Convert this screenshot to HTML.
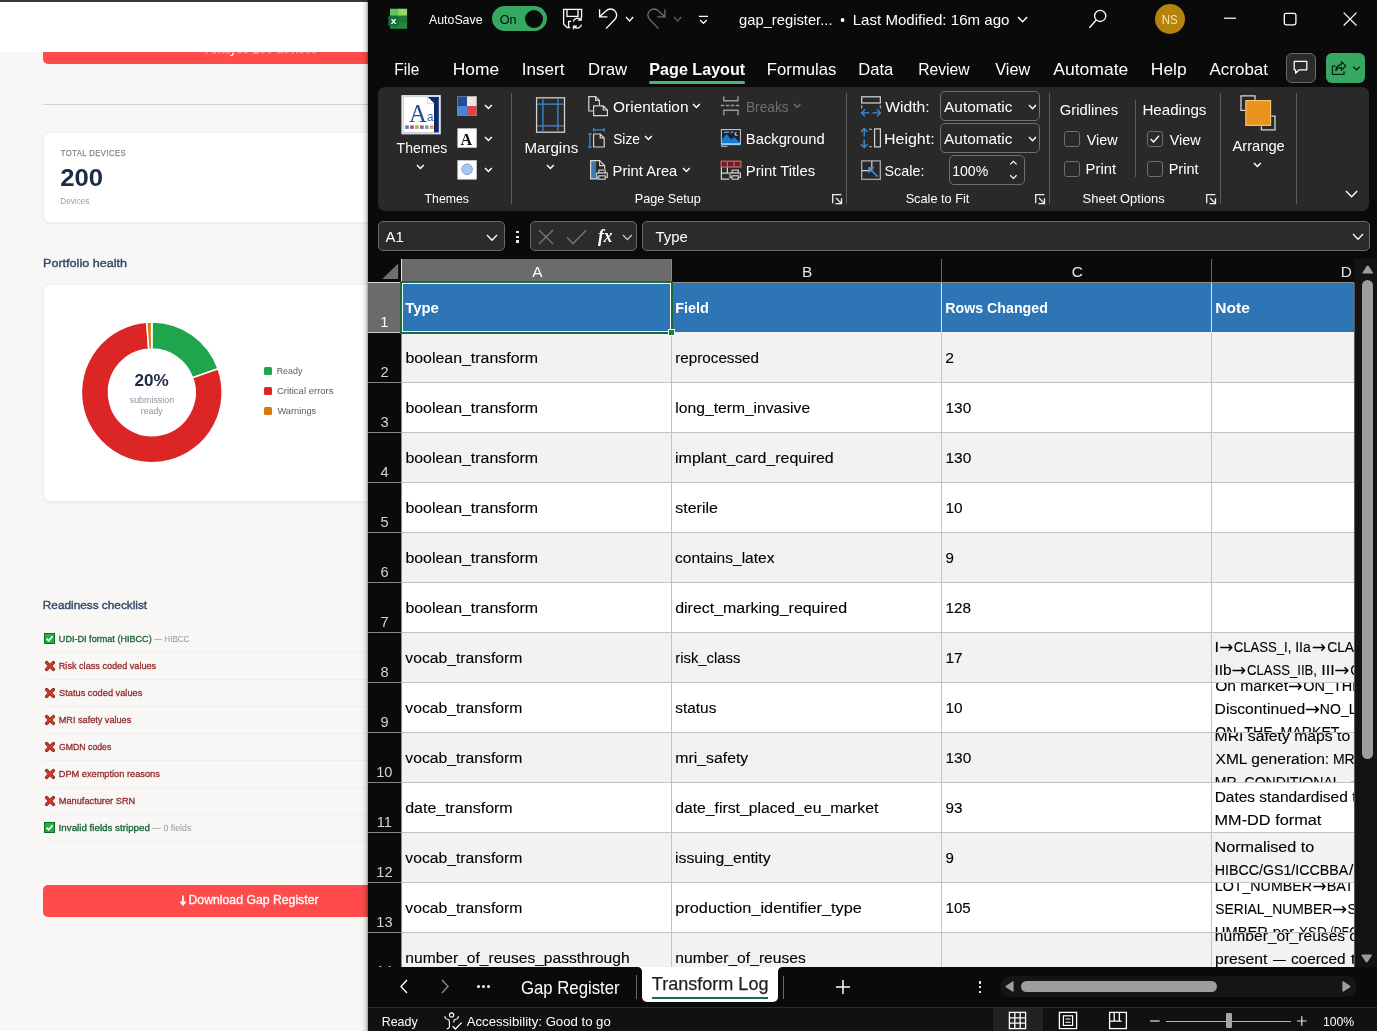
<!DOCTYPE html>
<html lang="en"><head><meta charset="utf-8"><title>Gap Register</title>
<style>
html,body{margin:0;padding:0}
body{width:1377px;height:1031px;overflow:hidden;position:relative;background:#f8f7f5;font-family:"Liberation Sans",sans-serif}
div,span.t,svg{position:absolute;box-sizing:border-box}
span.t{white-space:pre;line-height:0;transform-origin:0 50%;display:block}
svg{overflow:visible}
.clip{overflow:hidden}
#app{left:0;top:0;width:1377px;height:1031px;overflow:hidden;background:#f8f7f5;will-change:transform}
</style></head><body>
<div id="app">
<!-- ===== browser page (left) ===== -->
<div style="left:0px;top:2px;width:368px;height:50px;background:#ffffff;"></div>
<div style="left:0px;top:0px;width:368px;height:2px;background:#37383b;"></div>
<div style="left:43px;top:40px;width:420px;height:24px;background:#ff4b4b;border-radius:5px;"></div>
<span class="t" style="left:206px;top:49px;font-size:12.3px;color:#ffffff;-webkit-text-stroke:0.3px #ffffff;transform:scaleX(0.9876);">Analyse 200 devices</span>
<div style="left:43px;top:52px;width:325px;height:1px;background:rgba(255,75,75,.62);"></div>
<div style="left:0px;top:2px;width:368px;height:50px;background:#ffffff;"></div>
<div style="left:0px;top:0px;width:368px;height:2px;background:#37383b;"></div>
<div style="left:43px;top:104px;width:330px;height:1px;background:#d3d3d3;"></div>
<div style="left:43px;top:132px;width:420px;height:90.5px;background:#ffffff;border:1px solid #ededed;border-radius:7px;box-shadow:0 1px 3px rgba(0,0,0,.05);"></div>
<span class="t" style="left:60px;top:153px;font-size:8.3px;color:#85878b;-webkit-text-stroke:0.25px #85878b;letter-spacing:0.5px;transform:translateX(0.85px) scaleX(0.9200);">TOTAL DEVICES</span>
<span class="t" style="left:60px;top:178px;font-size:24.5px;color:#1b2a47;font-weight:700;transform:translateX(0.17px) scaleX(1.0476);">200</span>
<span class="t" style="left:60px;top:201px;font-size:8.4px;color:#9b9ea3;transform:translateX(0.34px) scaleX(0.9752);">Devices</span>
<span class="t" style="left:42px;top:263px;font-size:11.8px;color:#33496c;-webkit-text-stroke:0.4px #33496c;transform:translateX(0.99px) scaleX(1.0685);">Portfolio health</span>
<div style="left:43px;top:283.5px;width:420px;height:218px;background:#ffffff;border:1px solid #ededed;border-radius:7px;box-shadow:0 1px 3px rgba(0,0,0,.05);"></div>
<svg style="left:0;top:0" width="368" height="1031" viewBox="0 0 368 1031"><path d="M152.05 322.00A70.4 70.4 0 0 1 218.08 368.67L192.57 377.80A43.3 43.3 0 0 0 151.95 349.10Z" fill="#1fa64c" stroke="#fff" stroke-width="1.5"/><path d="M218.08 368.67A70.4 70.4 0 1 1 146.77 322.18L148.70 349.21A43.3 43.3 0 1 0 192.57 377.80Z" fill="#dc2626" stroke="#fff" stroke-width="1.5"/><path d="M146.77 322.18A70.4 70.4 0 0 1 151.55 322.00L151.65 349.10A43.3 43.3 0 0 0 148.70 349.21Z" fill="#d97a10" stroke="#fff" stroke-width="1.5"/></svg>
<span class="t" style="left:134px;top:381px;font-size:17px;color:#1b2a47;font-weight:700;transform:translateX(0.54px) scaleX(1.0071);">20%</span>
<span class="t" style="left:129px;top:400px;font-size:8.5px;color:#8f949c;transform:translateX(0.76px) scaleX(1.0423);">submission</span>
<span class="t" style="left:140px;top:411px;font-size:8.5px;color:#8f949c;transform:translateX(0.83px) scaleX(1.0232);">ready</span>
<div style="left:264px;top:366.7px;width:8px;height:8px;background:#1fa64c;border-radius:1.5px;"></div>
<span class="t" style="left:276px;top:371px;font-size:9.2px;color:#565d69;transform:translateX(0.69px) scaleX(0.9670);">Ready</span>
<div style="left:264px;top:386.9px;width:8px;height:8px;background:#dc2626;border-radius:1.5px;"></div>
<span class="t" style="left:276px;top:391px;font-size:9.2px;color:#565d69;transform:translateX(0.92px) scaleX(1.0369);">Critical errors</span>
<div style="left:264px;top:407.1px;width:8px;height:8px;background:#d97a10;border-radius:1.5px;"></div>
<span class="t" style="left:277px;top:411px;font-size:9.2px;color:#565d69;transform:translateX(0.38px) scaleX(1.0110);">Warnings</span>
<span class="t" style="left:42px;top:605px;font-size:11.8px;color:#33496c;-webkit-text-stroke:0.4px #33496c;transform:translateX(0.85px);">Readiness checklist</span>
<div style="left:43px;top:652px;width:330px;height:1px;background:#efeeec;"></div>
<svg style="left:44px;top:633px;" width="11" height="11" viewBox="0 0 11 11"><rect x="0.5" y="0.5" width="10" height="10" fill="#1fb141" stroke="#0f6b22"/><path d="M2.6 5.6L4.7 7.8L8.6 3.2" fill="none" stroke="#fff" stroke-width="1.6"/></svg>
<span class="t" style="left:58px;top:639px;font-size:9.4px;color:#1a6337;-webkit-text-stroke:0.3px #1a6337;transform:translateX(0.82px) scaleX(0.9692);">UDI-DI format (HIBCC)</span>
<span class="t" style="left:154px;top:639px;font-size:9.2px;color:#94979c;transform:scaleX(0.8791);">— HIBCC</span>
<div style="left:43px;top:679px;width:330px;height:1px;background:#efeeec;"></div>
<svg style="left:44.5px;top:660.8px;" width="10" height="10" viewBox="0 0 10 10"><path d="M1.6 1.6L8.4 8.4M8.4 1.6L1.6 8.4" fill="none" stroke="#7a1d12" stroke-width="3.4" stroke-linecap="round"/><path d="M1.7 1.7L8.3 8.3M8.3 1.7L1.7 8.3" fill="none" stroke="#cf3a27" stroke-width="2.2" stroke-linecap="round"/></svg>
<span class="t" style="left:58px;top:666px;font-size:9.4px;color:#922c2c;-webkit-text-stroke:0.3px #922c2c;transform:translateX(0.77px) scaleX(0.9734);">Risk class coded values</span>
<div style="left:43px;top:706px;width:330px;height:1px;background:#efeeec;"></div>
<svg style="left:44.5px;top:687.8px;" width="10" height="10" viewBox="0 0 10 10"><path d="M1.6 1.6L8.4 8.4M8.4 1.6L1.6 8.4" fill="none" stroke="#7a1d12" stroke-width="3.4" stroke-linecap="round"/><path d="M1.7 1.7L8.3 8.3M8.3 1.7L1.7 8.3" fill="none" stroke="#cf3a27" stroke-width="2.2" stroke-linecap="round"/></svg>
<span class="t" style="left:59px;top:693px;font-size:9.4px;color:#922c2c;-webkit-text-stroke:0.3px #922c2c;transform:translateX(0.08px) scaleX(0.9858);">Status coded values</span>
<div style="left:43px;top:733px;width:330px;height:1px;background:#efeeec;"></div>
<svg style="left:44.5px;top:714.8px;" width="10" height="10" viewBox="0 0 10 10"><path d="M1.6 1.6L8.4 8.4M8.4 1.6L1.6 8.4" fill="none" stroke="#7a1d12" stroke-width="3.4" stroke-linecap="round"/><path d="M1.7 1.7L8.3 8.3M8.3 1.7L1.7 8.3" fill="none" stroke="#cf3a27" stroke-width="2.2" stroke-linecap="round"/></svg>
<span class="t" style="left:58px;top:720px;font-size:9.4px;color:#922c2c;-webkit-text-stroke:0.3px #922c2c;transform:translateX(0.77px) scaleX(0.9725);">MRI safety values</span>
<div style="left:43px;top:760px;width:330px;height:1px;background:#efeeec;"></div>
<svg style="left:44.5px;top:741.8px;" width="10" height="10" viewBox="0 0 10 10"><path d="M1.6 1.6L8.4 8.4M8.4 1.6L1.6 8.4" fill="none" stroke="#7a1d12" stroke-width="3.4" stroke-linecap="round"/><path d="M1.7 1.7L8.3 8.3M8.3 1.7L1.7 8.3" fill="none" stroke="#cf3a27" stroke-width="2.2" stroke-linecap="round"/></svg>
<span class="t" style="left:59px;top:747px;font-size:9.4px;color:#922c2c;-webkit-text-stroke:0.3px #922c2c;transform:translateX(0.06px) scaleX(0.9276);">GMDN codes</span>
<div style="left:43px;top:787px;width:330px;height:1px;background:#efeeec;"></div>
<svg style="left:44.5px;top:768.8px;" width="10" height="10" viewBox="0 0 10 10"><path d="M1.6 1.6L8.4 8.4M8.4 1.6L1.6 8.4" fill="none" stroke="#7a1d12" stroke-width="3.4" stroke-linecap="round"/><path d="M1.7 1.7L8.3 8.3M8.3 1.7L1.7 8.3" fill="none" stroke="#cf3a27" stroke-width="2.2" stroke-linecap="round"/></svg>
<span class="t" style="left:58px;top:774px;font-size:9.4px;color:#922c2c;-webkit-text-stroke:0.3px #922c2c;transform:translateX(0.76px) scaleX(0.9838);">DPM exemption reasons</span>
<div style="left:43px;top:814px;width:330px;height:1px;background:#efeeec;"></div>
<svg style="left:44.5px;top:795.8px;" width="10" height="10" viewBox="0 0 10 10"><path d="M1.6 1.6L8.4 8.4M8.4 1.6L1.6 8.4" fill="none" stroke="#7a1d12" stroke-width="3.4" stroke-linecap="round"/><path d="M1.7 1.7L8.3 8.3M8.3 1.7L1.7 8.3" fill="none" stroke="#cf3a27" stroke-width="2.2" stroke-linecap="round"/></svg>
<span class="t" style="left:58px;top:801px;font-size:9.4px;color:#922c2c;-webkit-text-stroke:0.3px #922c2c;transform:translateX(0.76px) scaleX(0.9849);">Manufacturer SRN</span>
<div style="left:43px;top:841px;width:330px;height:1px;background:#efeeec;"></div>
<svg style="left:44px;top:822px;" width="11" height="11" viewBox="0 0 11 11"><rect x="0.5" y="0.5" width="10" height="10" fill="#1fb141" stroke="#0f6b22"/><path d="M2.6 5.6L4.7 7.8L8.6 3.2" fill="none" stroke="#fff" stroke-width="1.6"/></svg>
<span class="t" style="left:58px;top:828px;font-size:9.4px;color:#1a6337;-webkit-text-stroke:0.3px #1a6337;transform:translateX(0.62px) scaleX(1.0424);">Invalid fields stripped</span>
<span class="t" style="left:152px;top:828px;font-size:9.2px;color:#94979c;transform:translateX(0.30px) scaleX(0.9558);">— 0 fields</span>
<div style="left:43px;top:884.5px;width:412px;height:32px;background:#ff4b4b;border-radius:5px;"></div>
<svg style="left:180.3px;top:895.3px;" width="6" height="10.5" viewBox="0 0 6 10.5"><path d="M3 0.4V9.6M0.5 6.6L3 9.8L5.5 6.6" fill="none" stroke="#fff" stroke-width="1.7"/></svg>
<span class="t" style="left:188px;top:900px;font-size:12.3px;color:#ffffff;-webkit-text-stroke:0.3px #ffffff;transform:translateX(0.52px) scaleX(0.9959);">Download Gap Register</span>
<!-- ===== Excel window (right) ===== -->
<div style="left:360px;top:0px;width:8px;height:1031px;background:linear-gradient(90deg,rgba(0,0,0,0),rgba(0,0,0,.03) 40%,rgba(0,0,0,.16) 80%,rgba(0,0,0,.38));"></div>
<div style="left:368px;top:0px;width:1009px;height:1031px;background:#0a0a0a;"></div>
<svg style="left:386px;top:7px" width="23" height="24" viewBox="386 7 23 24"><g><rect x="390" y="8.7" width="9" height="7.4" fill="#5ec25d"/><rect x="398.5" y="8.7" width="8.6" height="7.4" fill="#93dc63"/><path d="M392.4 8.7H404.6Q407.1 8.7 407.1 11.2V26.3Q407.1 28.8 404.6 28.8H392.4Q390 28.8 390 26.3V11.2Q390 8.7 392.4 8.7Z" fill="none"/><rect x="390" y="15.7" width="17.1" height="13.1" fill="#21883c"/><rect x="398.5" y="15.7" width="8.6" height="6.6" fill="#1d7a36"/><rect x="388.3" y="15.7" width="10.4" height="10.5" fill="#176e38" rx="1.6"/></g></svg>
<span class="t" style="left:390px;top:21px;font-size:9.6px;color:#fff;font-weight:700;transform:translateX(0.85px) scaleX(1.0703);">x</span>
<span class="t" style="left:429px;top:20px;font-size:13.2px;color:#fff;transform:scaleX(0.9354);">AutoSave</span>
<div style="left:492px;top:6px;width:55px;height:25px;background:#37a862;border-radius:12.5px;"></div>
<span class="t" style="left:499px;top:20px;font-size:13.2px;color:#0a0a0a;transform:translateX(0.73px) scaleX(0.9586);">On</span>
<div style="left:525px;top:10px;width:18px;height:18px;background:#0a0a0a;border-radius:50%;"></div>
<svg style="left:562px;top:8px" width="22" height="23" viewBox="562 8 22 23"><path d="M570.2 27.6H567.2L563.6 24V9.4H581.6V17.4 M567 9.4V16.4H578V9.4 M568.6 27.4V21.4H571" fill="none" stroke="#ffffff" stroke-width="1.3" /><path d="M573.3 21.6A4.3 4.3 0 0 1 580.6 19.6 M581.2 16.8V20.2H577.8 M581.5 24.6A4.3 4.3 0 0 1 574.2 26.8 M573.5 29.4V26H576.9" fill="none" stroke="#ffffff" stroke-width="1.25" /></svg>
<svg style="left:597px;top:7px" width="22" height="24" viewBox="597 7 22 24"><path d="M599.6 9.3V16.9H607.4M599.9 16.6L606.2 10.8A6.1 6.1 0 0 1 614.8 19.5L606 28.6" fill="none" stroke="#ffffff" stroke-width="1.35" /></svg>
<svg style="left:624.8px;top:15.684px" width="9.2" height="6.032" viewBox="624.8 15.684 9.2 6.032"><path d="M625.8 16.684L629.4 20.716L633 16.684" fill="none" stroke="#ffffff" stroke-width="1.3" /></svg>
<svg style="left:645px;top:7px" width="22" height="24" viewBox="645 7 22 24"><path d="M664.9 9.3V16.9H657.1M664.6 16.6L658.3 10.8A6.1 6.1 0 0 0 649.7 19.5L658.5 28.6" fill="none" stroke="#6c6c6c" stroke-width="1.35" /></svg>
<svg style="left:672.8px;top:15.684px" width="9.2" height="6.032" viewBox="672.8 15.684 9.2 6.032"><path d="M673.8 16.684L677.4 20.716L681 16.684" fill="none" stroke="#5c5c5c" stroke-width="1.3" /></svg>
<svg style="left:697px;top:14px" width="13" height="12" viewBox="697 14 13 12"><path d="M698.9 16.3H708M700.1 20L703.45 23.3L706.8 20" fill="none" stroke="#ffffff" stroke-width="1.25" /></svg>
<span class="t" style="left:739px;top:20px;font-size:14.6px;color:#fff;transform:scaleX(1.0107);">gap_register...</span>
<span class="t" style="left:840px;top:20px;font-size:14.6px;color:#fff;transform:translateX(0.31px) scaleX(0.8966);">•</span>
<span class="t" style="left:852px;top:20px;font-size:14.6px;color:#fff;transform:translateX(0.69px) scaleX(1.0332);">Last Modified: 16m ago</span>
<svg style="left:1017.2px;top:15.808px" width="11.2" height="6.784" viewBox="-5.6 -3.392 11.2 6.784"><path d="M-4.6 -2.392L0 2.392L4.6 -2.392" fill="none" stroke="#fff" stroke-width="1.45"/></svg>
<svg style="left:1087px;top:8px" width="22" height="22" viewBox="1087 8 22 22"><circle cx="1100.2" cy="15.9" r="5.6" fill="none" stroke="#fff" stroke-width="1.3"/><path d="M1096.3 20L1089.4 27.8" fill="none" stroke="#ffffff" stroke-width="1.3" /></svg>
<div style="left:1155px;top:4px;width:30px;height:30px;background:#b5830f;border-radius:50%;"></div>
<span class="t" style="left:1161px;top:20px;font-size:12.4px;color:#ffe7a6;transform:translateX(0.79px) scaleX(0.9180);">NS</span>
<svg style="left:1222px;top:10px" width="138" height="18" viewBox="1222 10 138 18"><path d="M1223.9 18.2H1236.1" fill="none" stroke="#ffffff" stroke-width="1.2" /><rect x="1284.3" y="13.3" width="11.6" height="11.6" rx="1.8" fill="none" stroke="#fff" stroke-width="1.3"/><path d="M1343.7 12.7L1356.5 25.5M1356.5 12.7L1343.7 25.5" fill="none" stroke="#ffffff" stroke-width="1.2" /></svg>
<span class="t" style="left:394px;top:70px;font-size:16.6px;color:#fff;transform:translateX(0.36px) scaleX(0.9315);">File</span>
<span class="t" style="left:452px;top:70px;font-size:16.6px;color:#fff;transform:translateX(0.71px) scaleX(1.0486);">Home</span>
<span class="t" style="left:521px;top:70px;font-size:16.6px;color:#fff;transform:translateX(0.66px) scaleX(1.0295);">Insert</span>
<span class="t" style="left:588px;top:70px;font-size:16.6px;color:#fff;transform:translateX(0.06px) scaleX(1.0114);">Draw</span>
<span class="t" style="left:649px;top:70px;font-size:16.6px;color:#fff;font-weight:700;transform:translateX(0.35px) scaleX(0.9708);">Page Layout</span>
<span class="t" style="left:766px;top:70px;font-size:16.6px;color:#fff;transform:translateX(0.86px) scaleX(1.0064);">Formulas</span>
<span class="t" style="left:858px;top:70px;font-size:16.6px;color:#fff;transform:translateX(0.17px);">Data</span>
<span class="t" style="left:918px;top:70px;font-size:16.6px;color:#fff;transform:translateX(0.25px) scaleX(0.9443);">Review</span>
<span class="t" style="left:995px;top:70px;font-size:16.6px;color:#fff;transform:translateX(0.26px) scaleX(0.9779);">View</span>
<span class="t" style="left:1053px;top:70px;font-size:16.6px;color:#fff;transform:translateX(0.20px) scaleX(1.0577);">Automate</span>
<span class="t" style="left:1150px;top:70px;font-size:16.6px;color:#fff;transform:translateX(0.81px) scaleX(1.0492);">Help</span>
<span class="t" style="left:1209px;top:70px;font-size:16.6px;color:#fff;transform:translateX(0.50px) scaleX(1.0227);">Acrobat</span>
<div style="left:649px;top:81px;width:96px;height:3px;background:#4cb47c;border-radius:1.5px;"></div>
<div style="left:1286px;top:53px;width:30px;height:30px;background:#2b2b2b;border:1px solid #6b6b6b;border-radius:6px;"></div>
<div style="left:1326px;top:53px;width:39px;height:30px;background:#37a862;border-radius:6px;"></div>
<svg style="left:1290px;top:58px" width="22" height="20" viewBox="1290 58 22 20"><path d="M1294.2 61.4H1306.8V69.8H1299.2L1295.6 73.2V69.8H1294.2Z" fill="none" stroke="#ffffff" stroke-width="1.25" stroke-linejoin="round"/></svg>
<svg style="left:1329px;top:58px" width="34" height="20" viewBox="1329 58 34 20"><path d="M1335.6 66.2H1332.4V74.4H1344V71.2 M1335.8 70.6Q1336.4 65 1341.4 64.6V61.6L1345.8 65.9L1341.4 70.2V67.4Q1337.8 67.2 1335.8 70.6Z" fill="none" stroke="#0f1f14" stroke-width="1.25" stroke-linejoin="round"/><path d="M1353.3 66.8L1356.5 70L1359.7 66.8" fill="none" stroke="#0f1f14" stroke-width="1.3" /></svg>
<div style="left:378px;top:87px;width:991px;height:124px;background:#292929;border-radius:7px;"></div>
<span class="t" style="left:396px;top:148px;font-size:14.6px;color:#fff;transform:translateX(0.62px) scaleX(0.9588);">Themes</span>
<svg style="left:415.9px;top:163.832px" width="8.8" height="5.536" viewBox="-4.4 -2.768 8.8 5.536"><path d="M-3.4 -1.768L0 1.768L3.4 -1.768" fill="none" stroke="#fff" stroke-width="1.45"/></svg>
<svg style="left:484px;top:103.732px" width="8.8" height="5.536" viewBox="-4.4 -2.768 8.8 5.536"><path d="M-3.4 -1.768L0 1.768L3.4 -1.768" fill="none" stroke="#fff" stroke-width="1.45"/></svg>
<svg style="left:484px;top:135.732px" width="8.8" height="5.536" viewBox="-4.4 -2.768 8.8 5.536"><path d="M-3.4 -1.768L0 1.768L3.4 -1.768" fill="none" stroke="#fff" stroke-width="1.45"/></svg>
<svg style="left:484px;top:167.232px" width="8.8" height="5.536" viewBox="-4.4 -2.768 8.8 5.536"><path d="M-3.4 -1.768L0 1.768L3.4 -1.768" fill="none" stroke="#fff" stroke-width="1.45"/></svg>
<span class="t" style="left:424px;top:199px;font-size:13px;color:#fff;transform:translateX(0.55px) scaleX(0.9449);">Themes</span>
<div style="left:510.9px;top:92.5px;width:1px;height:111.5px;background:#5c5c5c;"></div>
<span class="t" style="left:524px;top:148px;font-size:14.6px;color:#fff;transform:translateX(0.39px) scaleX(1.0366);">Margins</span>
<svg style="left:545.6px;top:163.832px" width="8.8" height="5.536" viewBox="-4.4 -2.768 8.8 5.536"><path d="M-3.4 -1.768L0 1.768L3.4 -1.768" fill="none" stroke="#fff" stroke-width="1.45"/></svg>
<span class="t" style="left:613px;top:107px;font-size:14.6px;color:#fff;transform:translateX(0.11px) scaleX(1.0555);">Orientation</span>
<svg style="left:691.9px;top:102.832px" width="8.8" height="5.536" viewBox="-4.4 -2.768 8.8 5.536"><path d="M-3.4 -1.768L0 1.768L3.4 -1.768" fill="none" stroke="#fff" stroke-width="1.45"/></svg>
<span class="t" style="left:613px;top:139px;font-size:14.6px;color:#fff;transform:translateX(0.18px) scaleX(0.9403);">Size</span>
<svg style="left:644.2px;top:134.832px" width="8.8" height="5.536" viewBox="-4.4 -2.768 8.8 5.536"><path d="M-3.4 -1.768L0 1.768L3.4 -1.768" fill="none" stroke="#fff" stroke-width="1.45"/></svg>
<span class="t" style="left:612px;top:171px;font-size:14.6px;color:#fff;transform:translateX(0.62px) scaleX(1.0085);">Print Area</span>
<svg style="left:682px;top:166.832px" width="8.8" height="5.536" viewBox="-4.4 -2.768 8.8 5.536"><path d="M-3.4 -1.768L0 1.768L3.4 -1.768" fill="none" stroke="#fff" stroke-width="1.45"/></svg>
<span class="t" style="left:745px;top:107px;font-size:14.6px;color:#6f6f6f;transform:translateX(0.90px) scaleX(0.9414);">Breaks</span>
<svg style="left:793.4px;top:102.936px" width="8.4" height="5.328" viewBox="-4.2 -2.664 8.4 5.328"><path d="M-3.2 -1.6640000000000001L0 1.6640000000000001L3.2 -1.6640000000000001" fill="none" stroke="#6f6f6f" stroke-width="1.45"/></svg>
<span class="t" style="left:745px;top:139px;font-size:14.6px;color:#fff;transform:translateX(0.82px) scaleX(1.0117);">Background</span>
<span class="t" style="left:745px;top:171px;font-size:14.6px;color:#fff;transform:translateX(0.81px) scaleX(1.0171);">Print Titles</span>
<span class="t" style="left:634px;top:199px;font-size:13px;color:#fff;transform:translateX(0.69px) scaleX(0.9734);">Page Setup</span>
<svg style="left:832.1px;top:194px;" width="11" height="11" viewBox="0 0 11 11"><path d="M0.7 9.2V0.7H9.4M4 4L9.4 9.4M9.5 4.2V9.6H3.5" fill="none" stroke="#f0f0f0" stroke-width="1.3"/></svg>
<div style="left:846.3px;top:92.5px;width:1px;height:111.5px;background:#5c5c5c;"></div>
<span class="t" style="left:885px;top:107px;font-size:14.6px;color:#fff;transform:translateX(0.16px) scaleX(1.0739);">Width:</span>
<span class="t" style="left:883px;top:139px;font-size:14.6px;color:#fff;transform:translateX(0.92px) scaleX(1.0968);">Height:</span>
<span class="t" style="left:884px;top:171px;font-size:14.6px;color:#fff;transform:translateX(0.56px) scaleX(0.9814);">Scale:</span>
<div style="left:940px;top:91px;width:100px;height:30px;background:#292929;border:1px solid #707070;border-radius:5px;"></div>
<div style="left:940px;top:123px;width:100px;height:30px;background:#292929;border:1px solid #707070;border-radius:5px;"></div>
<div style="left:949px;top:155px;width:76px;height:30px;background:#292929;border:1px solid #707070;border-radius:5px;"></div>
<span class="t" style="left:944px;top:107px;font-size:14.6px;color:#fff;transform:translateX(0.10px) scaleX(1.0531);">Automatic</span>
<span class="t" style="left:944px;top:139px;font-size:14.6px;color:#fff;transform:translateX(0.10px) scaleX(1.0531);">Automatic</span>
<span class="t" style="left:952px;top:171px;font-size:14.6px;color:#fff;transform:translateX(0.14px) scaleX(0.9655);">100%</span>
<svg style="left:1027.8px;top:103.78px" width="9" height="5.64" viewBox="-4.5 -2.8200000000000003 9.0 5.640000000000001"><path d="M-3.5 -1.82L0 1.82L3.5 -1.82" fill="none" stroke="#fff" stroke-width="1.45"/></svg>
<svg style="left:1027.8px;top:135.78px" width="9" height="5.64" viewBox="-4.5 -2.8200000000000003 9.0 5.640000000000001"><path d="M-3.5 -1.82L0 1.82L3.5 -1.82" fill="none" stroke="#fff" stroke-width="1.45"/></svg>
<svg style="left:1008px;top:158px" width="11" height="24" viewBox="0 0 11 24"><path d="M2.2 6.4L5.4 3.3L8.6 6.4M2.2 17.3L5.4 20.4L8.6 17.3" fill="none" stroke="#fff" stroke-width="1.2"/></svg>
<span class="t" style="left:905px;top:199px;font-size:13px;color:#fff;transform:translateX(0.63px) scaleX(0.9785);">Scale to Fit</span>
<svg style="left:1034.9px;top:194px;" width="11" height="11" viewBox="0 0 11 11"><path d="M0.7 9.2V0.7H9.4M4 4L9.4 9.4M9.5 4.2V9.6H3.5" fill="none" stroke="#f0f0f0" stroke-width="1.3"/></svg>
<div style="left:1048.9px;top:92.5px;width:1px;height:111.5px;background:#5c5c5c;"></div>
<span class="t" style="left:1059px;top:110px;font-size:14.6px;color:#fff;transform:translateX(0.66px) scaleX(1.0168);">Gridlines</span>
<span class="t" style="left:1086px;top:140px;font-size:14.6px;color:#fff;transform:translateX(0.76px) scaleX(0.9844);">View</span>
<span class="t" style="left:1085px;top:169px;font-size:14.6px;color:#fff;transform:translateX(0.61px) scaleX(1.0152);">Print</span>
<div style="left:1064.3px;top:131.3px;width:15.6px;height:15.6px;background:#292929;border:1px solid #6e6e6e;border-radius:3px;"></div>
<div style="left:1064.3px;top:161.3px;width:15.6px;height:15.6px;background:#292929;border:1px solid #6e6e6e;border-radius:3px;"></div>
<div style="left:1135.1px;top:100.3px;width:1px;height:77.2px;background:#5c5c5c;"></div>
<span class="t" style="left:1142px;top:110px;font-size:14.6px;color:#fff;transform:translateX(0.39px) scaleX(1.0382);">Headings</span>
<span class="t" style="left:1169px;top:140px;font-size:14.6px;color:#fff;transform:translateX(0.76px) scaleX(0.9844);">View</span>
<span class="t" style="left:1168px;top:169px;font-size:14.6px;color:#fff;transform:translateX(0.64px) scaleX(0.9944);">Print</span>
<div style="left:1147.2px;top:131.3px;width:15.6px;height:15.6px;background:#292929;border:1px solid #6e6e6e;border-radius:3px;"></div>
<div style="left:1147.2px;top:161.3px;width:15.6px;height:15.6px;background:#292929;border:1px solid #6e6e6e;border-radius:3px;"></div>
<svg style="left:1147.2px;top:131.3px;" width="15.6" height="15.6" viewBox="0 0 15.6 15.6"><path d="M3.6 8L6.6 11L12 4.8" fill="none" stroke="#fff" stroke-width="1.4"/></svg>
<span class="t" style="left:1082px;top:199px;font-size:13px;color:#fff;transform:translateX(0.62px) scaleX(0.9957);">Sheet Options</span>
<svg style="left:1205.9px;top:194px;" width="11" height="11" viewBox="0 0 11 11"><path d="M0.7 9.2V0.7H9.4M4 4L9.4 9.4M9.5 4.2V9.6H3.5" fill="none" stroke="#f0f0f0" stroke-width="1.3"/></svg>
<div style="left:1219.9px;top:92.5px;width:1px;height:111.5px;background:#5c5c5c;"></div>
<span class="t" style="left:1232px;top:146px;font-size:14.6px;color:#fff;transform:translateX(0.40px) scaleX(1.0094);">Arrange</span>
<svg style="left:1252.8px;top:161.832px" width="8.8" height="5.536" viewBox="-4.4 -2.768 8.8 5.536"><path d="M-3.4 -1.768L0 1.768L3.4 -1.768" fill="none" stroke="#fff" stroke-width="1.45"/></svg>
<div style="left:1296.2px;top:92.5px;width:1px;height:111.5px;background:#5c5c5c;"></div>
<svg style="left:1345.4px;top:190.288px" width="13.2" height="7.824" viewBox="-6.6 -3.912 13.2 7.824"><path d="M-5.6 -2.912L0 2.912L5.6 -2.912" fill="none" stroke="#fff" stroke-width="1.4"/></svg>
<svg style="left:378px;top:88px" width="992" height="122" viewBox="378 88 992 122"><rect x="401.9" y="95.5" width="38.4" height="38.4" fill="#ffffff" stroke="#d9d9d9" stroke-width="1"/><rect x="403.2" y="96.8" width="35.8" height="35.8" fill="#ffffff" stroke="#9fb1cc" stroke-width="0.6"/><rect x="434" y="97" width="4.8" height="35.4" fill="#0c2a6e"/><path d="M427.6 97H434.2V103.6Z" fill="#0c2a6e"/><path d="M427.6 97V103.6H434.2" fill="#fff" stroke="#b9c4d8" stroke-width="0.7"/><rect x="405.2" y="125.4" width="3.6" height="3.5" fill="#4f81bd"/><rect x="410.15" y="125.4" width="3.6" height="3.5" fill="#c0504d"/><rect x="415.1" y="125.4" width="3.6" height="3.5" fill="#9bbb59"/><rect x="420.05" y="125.4" width="3.6" height="3.5" fill="#8064a2"/><rect x="425" y="125.4" width="3.6" height="3.5" fill="#4bacc6"/><rect x="429.95" y="125.4" width="3.6" height="3.5" fill="#f79646"/><rect x="457" y="96" width="20" height="20" fill="#8a8a8a"/><rect x="457.6" y="96.6" width="9.4" height="9.4" fill="#1f4e9a"/><rect x="467" y="96.6" width="9.4" height="9.4" fill="#ece7df"/><rect x="457.6" y="106" width="9.4" height="9.4" fill="#4c86d2"/><rect x="467" y="106" width="9.4" height="9.4" fill="#df4545"/><rect x="457.8" y="128.7" width="18.6" height="18.7" fill="#ffffff" stroke="#cfcfcf" stroke-width="0.8"/><rect x="457.8" y="160.5" width="18.6" height="18.7" fill="#ffffff" stroke="#cfcfcf" stroke-width="0.8"/><circle cx="467.1" cy="169.3" r="5.3" fill="#a9c5f2" stroke="#7f9fd6" stroke-width="1"/><rect x="536.6" y="97.8" width="27.9" height="34.4" fill="none" stroke="#d2d0cf" stroke-width="1.3"/><path d="M542.9 98.4V131.6M557.9 98.4V131.6M537.2 104.2H563.9M537.2 125.8H563.9" fill="none" stroke="#3b8ed8" stroke-width="1.25" /><path d="M593.2 111H588.8V96.6H595.6L599.4 100.4V105.2 M595.6 96.6V100.4H599.4" fill="none" stroke="#d6d6d6" stroke-width="1.2" /><path d="M593.6 105.8H603.2L607.4 110V115.6H593.6Z M603.2 105.8V110H607.4" fill="none" stroke="#d6d6d6" stroke-width="1.2" /><path d="M593.6 134H600.2L604.2 138V147H593.6Z M600.2 134V138H604.2" fill="none" stroke="#d6d6d6" stroke-width="1.2" stroke-linejoin="miter"/><path d="M589.9 133.6V147.4M587.9 133.9H591.9M587.9 147.1H591.9 M593.6 130V130M593.4 129.8H604.4M593.7 127.8V131.8M604.1 127.8V131.8" fill="none" stroke="#3b8ed8" stroke-width="1.25" /><rect x="591" y="161" width="5" height="17.8" fill="#3f78b0"/><path d="M598 178.9H590.6V160.6H599.6L604.6 165.6V169" fill="none" stroke="#d6d6d6" stroke-width="1.2" /><path d="M599.6 160.6V165.6H604.6" fill="none" stroke="#d6d6d6" stroke-width="1.1" /><rect x="598.8" y="170.1" width="6.4" height="3" fill="#292929" stroke="#d6d6d6" stroke-width="1.1"/><rect x="596.7" y="173" width="10.6" height="4.4" fill="#292929" stroke="#d6d6d6" stroke-width="1.1"/><rect x="598.8" y="175.8" width="6.4" height="3.4" fill="#292929" stroke="#d6d6d6" stroke-width="1.1"/><path d="M723.8 96.2V100.7H738V96.2 M723.8 115.2V110.2H738V115.2" fill="none" stroke="#9a9a9a" stroke-width="1.4" /><path d="M720.8 105.5H740.2" fill="none" stroke="#9a9a9a" stroke-width="1.4" stroke-dasharray="3.4 1.6"/><rect x="721.4" y="129.6" width="19" height="14" fill="#16233d" stroke="#cfd3d8" stroke-width="1"/><path d="M721.9 143.2V139.4L726.6 134.2L731.4 139.6L734.2 137L739.9 142.4V143.2Z" fill="#1b79d3"/><circle cx="736.4" cy="134" r="1.9" fill="#f2b36c"/><circle cx="737.5" cy="133.4" r="1.5" fill="#16233d"/><path d="M724 132.2H729M730.6 132.2H733.4" fill="none" stroke="#d6d6d6" stroke-width="0.9" /><rect x="721.2" y="143.6" width="19.4" height="1.6" fill="#8fcdf5"/><path d="M721.6 145.2V146.4H727.4" fill="none" stroke="#d6d6d6" stroke-width="0.9" /><rect x="721.2" y="161.2" width="19.6" height="5.8" fill="#6d1f28" stroke="#d2606b" stroke-width="1.3"/><path d="M727.4 161.4V166.8M734 161.4V166.8" fill="none" stroke="#d2606b" stroke-width="1.2" /><path d="M721.4 167.2V179.2H729.4M721.4 173.2H729M727.4 167.4V172.8" fill="none" stroke="#d6d6d6" stroke-width="1.2" /><rect x="732.1" y="170.1" width="6.2" height="3" fill="#292929" stroke="#d6d6d6" stroke-width="1.1"/><rect x="730" y="173" width="10.4" height="4.4" fill="#292929" stroke="#d6d6d6" stroke-width="1.1"/><rect x="732.1" y="175.8" width="6.2" height="3.4" fill="#292929" stroke="#d6d6d6" stroke-width="1.1"/><rect x="861.7" y="96.8" width="18.6" height="6.2" fill="none" stroke="#d6d6d6" stroke-width="1.2"/><path d="M861.7 105.2V108.4M880.3 105.2V108.4" fill="none" stroke="#bdbdbd" stroke-width="1.1" /><path d="M861.6 112.9H869.2M872.4 112.9H880.4" fill="none" stroke="#3b8ed8" stroke-width="1.4" /><path d="M865 109.6L861.6 112.9L865 116.2M877 109.6L880.4 112.9L877 116.2" fill="none" stroke="#3b8ed8" stroke-width="1.4" /><rect x="874.6" y="128.9" width="5.8" height="18" fill="none" stroke="#d6d6d6" stroke-width="1.2"/><path d="M869 129.2H872M869 146.8H872" fill="none" stroke="#bdbdbd" stroke-width="1.1" /><path d="M864.2 128.6V136.4M864.2 139.6V147.6" fill="none" stroke="#3b8ed8" stroke-width="1.4" /><path d="M860.9 132L864.2 128.6L867.5 132M860.9 144.2L864.2 147.6L867.5 144.2" fill="none" stroke="#3b8ed8" stroke-width="1.4" /><rect x="861.7" y="160.9" width="18.6" height="18.4" fill="none" stroke="#b4b4b4" stroke-width="1.2"/><path d="M861.8 170.6H871.8V161" fill="none" stroke="#d6d6d6" stroke-width="1.2" /><path d="M877.6 176.6L869 168 M868.8 173V167.8H874" fill="none" stroke="#3b8ed8" stroke-width="1.6" /><path d="M1245 110.4H1241V95.9H1255V99.8" fill="none" stroke="#d6d6d6" stroke-width="1.3" /><path d="M1271.4 116.2H1275V129.9H1261.4V126.2" fill="none" stroke="#d6d6d6" stroke-width="1.3" /><rect x="1245.8" y="100.6" width="24.8" height="24.8" fill="#e8931d" stroke="#f9c877" stroke-width="1.1"/></svg>
<span class="t" style="left:408.6px;top:113.5px;font-size:26px;color:#1f4e8c;font-family:'Liberation Serif',serif;transform:scaleX(.95)">A</span>
<span class="t" style="left:426.6px;top:116.8px;font-size:13px;color:#3a6fb5;transform:scaleX(.9)">a</span>
<span class="t" style="left:460.4px;top:139.8px;font-size:16px;color:#111;font-family:'Liberation Serif',serif;font-weight:700">A</span>
<div style="left:378px;top:221px;width:127px;height:30px;background:#2b2b2b;border:1px solid #6a6a6a;border-radius:5px;"></div>
<span class="t" style="left:385px;top:237px;font-size:15.4px;color:#fff;transform:translateX(0.50px) scaleX(0.9726);">A1</span>
<svg style="left:485.5px;top:234.4px" width="12" height="7.2" viewBox="-6 -3.6 12 7.2"><path d="M-5 -2.6L0 2.6L5 -2.6" fill="none" stroke="#fff" stroke-width="1.3"/></svg>
<div style="left:516.1px;top:231px;width:2.6px;height:2.4px;background:#e8e8e8;"></div>
<div style="left:516.1px;top:235.7px;width:2.6px;height:2.4px;background:#e8e8e8;"></div>
<div style="left:516.1px;top:240.4px;width:2.6px;height:2.4px;background:#e8e8e8;"></div>
<div style="left:530px;top:221px;width:107px;height:30px;background:#2b2b2b;border:1px solid #6a6a6a;border-radius:5px;"></div>
<svg style="left:538px;top:229px;" width="16" height="16" viewBox="0 0 16 16"><path d="M1 1L15 15M15 1L1 15" fill="none" stroke="#7a7a7a" stroke-width="1.3"/></svg>
<svg style="left:566px;top:229px;" width="21" height="16" viewBox="0 0 21 16"><path d="M1 8.5L7 14.5L20 1.5" fill="none" stroke="#7a7a7a" stroke-width="1.3"/></svg>
<span class="t" style="left:597.5px;top:236.2px;font-size:19px;color:#fff;font-family:'Liberation Serif',serif;font-style:italic;font-weight:700;transform:scaleX(.92)">fx</span>
<svg style="left:621.9px;top:233.712px" width="10.8" height="6.576" viewBox="-5.4 -3.2880000000000003 10.8 6.5760000000000005"><path d="M-4.4 -2.2880000000000003L0 2.2880000000000003L4.4 -2.2880000000000003" fill="none" stroke="#d0d0d0" stroke-width="1.2"/></svg>
<div style="left:642px;top:221px;width:728px;height:30px;background:#2b2b2b;border:1px solid #6a6a6a;border-radius:5px;"></div>
<span class="t" style="left:655px;top:237px;font-size:15.4px;color:#fff;transform:translateX(0.50px) scaleX(0.9717);">Type</span>
<svg style="left:1351.5px;top:232.9px" width="12" height="7.2" viewBox="-6 -3.6 12 7.2"><path d="M-5 -2.6L0 2.6L5 -2.6" fill="none" stroke="#fff" stroke-width="1.3"/></svg>
<div style="left:402px;top:259px;width:269px;height:22px;background:#6b6b6b;"></div>
<div style="left:401px;top:259px;width:1px;height:22px;background:#e4e4e4;"></div>
<svg style="left:382px;top:263px;" width="17" height="17" viewBox="0 0 17 17"><path d="M16.2 0.5V16H0.3Z" fill="#6f6f6f"/></svg>
<div style="left:671px;top:259px;width:1px;height:23px;background:#8a8a8a;"></div>
<div style="left:941px;top:259px;width:1px;height:23px;background:#6a6a6a;"></div>
<div style="left:1211px;top:259px;width:1px;height:23px;background:#6a6a6a;"></div>
<div style="left:672px;top:282px;width:682px;height:1px;background:#8f8f8f;"></div>
<span class="t" style="left:532px;top:272px;font-size:15.4px;color:#fff;transform:translateX(0.28px);">A</span>
<span class="t" style="left:801px;top:272px;font-size:15.4px;color:#e6e6e6;transform:translateX(0.95px);">B</span>
<span class="t" style="left:1071px;top:272px;font-size:15.4px;color:#e6e6e6;transform:translateX(0.64px);">C</span>
<span class="t" style="left:1340px;top:272px;font-size:15.4px;color:#e6e6e6;transform:translateX(0.79px);">D</span>
<div style="left:368px;top:283px;width:33px;height:49.5px;background:#6b6b6b;"></div>
<div style="left:368px;top:282px;width:33px;height:1px;background:#d9d9d9;"></div>
<div style="left:368px;top:332px;width:33px;height:1px;background:#d0d0d0;"></div>
<span class="t" style="left:380px;top:322px;font-size:14.6px;color:#fff;transform:translateX(0.35px);">1</span>
<div style="left:368px;top:382px;width:33px;height:1px;background:#868686;"></div>
<span class="t" style="left:380px;top:372px;font-size:14.6px;color:#d4d4d4;transform:translateX(0.53px);">2</span>
<div style="left:368px;top:432px;width:33px;height:1px;background:#868686;"></div>
<span class="t" style="left:380px;top:422px;font-size:14.6px;color:#d4d4d4;transform:translateX(0.59px);">3</span>
<div style="left:368px;top:482px;width:33px;height:1px;background:#868686;"></div>
<span class="t" style="left:380px;top:472px;font-size:14.6px;color:#d4d4d4;transform:translateX(0.58px);">4</span>
<div style="left:368px;top:532px;width:33px;height:1px;background:#868686;"></div>
<span class="t" style="left:380px;top:522px;font-size:14.6px;color:#d4d4d4;transform:translateX(0.55px);">5</span>
<div style="left:368px;top:582px;width:33px;height:1px;background:#868686;"></div>
<span class="t" style="left:380px;top:572px;font-size:14.6px;color:#d4d4d4;transform:translateX(0.49px);">6</span>
<div style="left:368px;top:632px;width:33px;height:1px;background:#868686;"></div>
<span class="t" style="left:380px;top:622px;font-size:14.6px;color:#d4d4d4;transform:translateX(0.53px);">7</span>
<div style="left:368px;top:682px;width:33px;height:1px;background:#868686;"></div>
<span class="t" style="left:380px;top:672px;font-size:14.6px;color:#d4d4d4;transform:translateX(0.53px);">8</span>
<div style="left:368px;top:732px;width:33px;height:1px;background:#868686;"></div>
<span class="t" style="left:380px;top:722px;font-size:14.6px;color:#d4d4d4;transform:translateX(0.55px);">9</span>
<div style="left:368px;top:782px;width:33px;height:1px;background:#868686;"></div>
<span class="t" style="left:376px;top:772px;font-size:14.6px;color:#d4d4d4;transform:translateX(0.22px);">10</span>
<div style="left:368px;top:832px;width:33px;height:1px;background:#868686;"></div>
<span class="t" style="left:376px;top:822px;font-size:14.6px;color:#d4d4d4;transform:translateX(0.83px);">11</span>
<div style="left:368px;top:882px;width:33px;height:1px;background:#868686;"></div>
<span class="t" style="left:376px;top:872px;font-size:14.6px;color:#d4d4d4;transform:translateX(0.30px);">12</span>
<div style="left:368px;top:932px;width:33px;height:1px;background:#868686;"></div>
<span class="t" style="left:376px;top:922px;font-size:14.6px;color:#d4d4d4;transform:translateX(0.26px);">13</span>
<span class="t" style="left:376px;top:971px;font-size:14.6px;color:#d4d4d4;transform:translateX(0.15px);">14</span>
<div class="clip" style="left:401px;top:283px;width:953px;height:684px;background:#fff">
<div style="left:0px;top:0px;width:954px;height:49px;background:#2e75b6;"></div>
<div style="left:0px;top:48px;width:954px;height:1px;background:#2b6cab;"></div>
<div style="left:0px;top:50px;width:954px;height:49px;background:#f2f2f2;"></div>
<div style="left:0px;top:49px;width:954px;height:1px;background:#f6f4f3;"></div>
<div style="left:0px;top:100px;width:954px;height:49px;background:#ffffff;"></div>
<div style="left:0px;top:99px;width:954px;height:1px;background:#c3c3c3;"></div>
<div style="left:0px;top:150px;width:954px;height:49px;background:#f2f2f2;"></div>
<div style="left:0px;top:149px;width:954px;height:1px;background:#c3c3c3;"></div>
<div style="left:0px;top:200px;width:954px;height:49px;background:#ffffff;"></div>
<div style="left:0px;top:199px;width:954px;height:1px;background:#c3c3c3;"></div>
<div style="left:0px;top:250px;width:954px;height:49px;background:#f2f2f2;"></div>
<div style="left:0px;top:249px;width:954px;height:1px;background:#c3c3c3;"></div>
<div style="left:0px;top:300px;width:954px;height:49px;background:#ffffff;"></div>
<div style="left:0px;top:299px;width:954px;height:1px;background:#c3c3c3;"></div>
<div style="left:0px;top:350px;width:954px;height:49px;background:#f2f2f2;"></div>
<div style="left:0px;top:349px;width:954px;height:1px;background:#c3c3c3;"></div>
<div style="left:0px;top:400px;width:954px;height:49px;background:#ffffff;"></div>
<div style="left:0px;top:399px;width:954px;height:1px;background:#c3c3c3;"></div>
<div style="left:0px;top:450px;width:954px;height:49px;background:#f2f2f2;"></div>
<div style="left:0px;top:449px;width:954px;height:1px;background:#c3c3c3;"></div>
<div style="left:0px;top:500px;width:954px;height:49px;background:#ffffff;"></div>
<div style="left:0px;top:499px;width:954px;height:1px;background:#c3c3c3;"></div>
<div style="left:0px;top:550px;width:954px;height:49px;background:#f2f2f2;"></div>
<div style="left:0px;top:549px;width:954px;height:1px;background:#c3c3c3;"></div>
<div style="left:0px;top:600px;width:954px;height:49px;background:#ffffff;"></div>
<div style="left:0px;top:599px;width:954px;height:1px;background:#c3c3c3;"></div>
<div style="left:0px;top:650px;width:954px;height:49px;background:#f2f2f2;"></div>
<div style="left:0px;top:649px;width:954px;height:1px;background:#c3c3c3;"></div>
<div style="left:0px;top:50px;width:1px;height:640px;background:#8a8a8a;"></div>
<div style="left:270px;top:49px;width:1px;height:640px;background:#c3c3c3;"></div>
<div style="left:270px;top:0px;width:1px;height:49px;background:#2e75b6;"></div>
<div style="left:540px;top:49px;width:1px;height:640px;background:#c3c3c3;"></div>
<div style="left:540px;top:0px;width:1px;height:49px;background:#d9e3ee;"></div>
<div style="left:810px;top:49px;width:1px;height:640px;background:#c3c3c3;"></div>
<div style="left:810px;top:0px;width:1px;height:49px;background:#d9e3ee;"></div>
<span class="t" style="left:4px;top:25px;font-size:15.3px;color:#fff;font-weight:700;transform:translateX(0.18px) scaleX(0.9744);">Type</span>
<span class="t" style="left:274px;top:25px;font-size:15.3px;color:#fff;font-weight:700;transform:translateX(0.15px) scaleX(0.9472);">Field</span>
<span class="t" style="left:544px;top:25px;font-size:15.3px;color:#fff;font-weight:700;transform:translateX(0.25px) scaleX(0.9286);">Rows Changed</span>
<span class="t" style="left:814px;top:25px;font-size:15.3px;color:#fff;font-weight:700;transform:translateX(0.16px) scaleX(1.0195);">Note</span>
<span class="t" style="left:4px;top:75px;font-size:15.3px;color:#000;-webkit-text-stroke:0.12px #000;transform:translateX(0.40px) scaleX(1.0401);">boolean_transform</span>
<span class="t" style="left:274px;top:75px;font-size:15.3px;color:#000;-webkit-text-stroke:0.12px #000;transform:translateX(0.27px) scaleX(0.9948);">reprocessed</span>
<span class="t" style="left:544px;top:75px;font-size:15.3px;color:#000;-webkit-text-stroke:0.12px #000;transform:translateX(0.14px) scaleX(1.0261);">2</span>
<span class="t" style="left:4px;top:125px;font-size:15.3px;color:#000;-webkit-text-stroke:0.12px #000;transform:translateX(0.40px) scaleX(1.0401);">boolean_transform</span>
<span class="t" style="left:274px;top:125px;font-size:15.3px;color:#000;-webkit-text-stroke:0.12px #000;transform:translateX(0.37px) scaleX(1.0223);">long_term_invasive</span>
<span class="t" style="left:544px;top:125px;font-size:15.3px;color:#000;-webkit-text-stroke:0.12px #000;transform:translateX(0.49px) scaleX(1.0075);">130</span>
<span class="t" style="left:4px;top:175px;font-size:15.3px;color:#000;-webkit-text-stroke:0.12px #000;transform:translateX(0.40px) scaleX(1.0401);">boolean_transform</span>
<span class="t" style="left:274px;top:175px;font-size:15.3px;color:#000;-webkit-text-stroke:0.12px #000;transform:translateX(0.06px) scaleX(1.0424);">implant_card_required</span>
<span class="t" style="left:544px;top:175px;font-size:15.3px;color:#000;-webkit-text-stroke:0.12px #000;transform:translateX(0.49px) scaleX(1.0075);">130</span>
<span class="t" style="left:4px;top:225px;font-size:15.3px;color:#000;-webkit-text-stroke:0.12px #000;transform:translateX(0.40px) scaleX(1.0401);">boolean_transform</span>
<span class="t" style="left:274px;top:225px;font-size:15.3px;color:#000;-webkit-text-stroke:0.12px #000;transform:translateX(0.31px) scaleX(1.0437);">sterile</span>
<span class="t" style="left:544px;top:225px;font-size:15.3px;color:#000;-webkit-text-stroke:0.12px #000;transform:translateX(0.49px) scaleX(1.0081);">10</span>
<span class="t" style="left:4px;top:275px;font-size:15.3px;color:#000;-webkit-text-stroke:0.12px #000;transform:translateX(0.40px) scaleX(1.0401);">boolean_transform</span>
<span class="t" style="left:274px;top:275px;font-size:15.3px;color:#000;-webkit-text-stroke:0.12px #000;transform:translateX(0.09px) scaleX(1.0165);">contains_latex</span>
<span class="t" style="left:544px;top:275px;font-size:15.3px;color:#000;-webkit-text-stroke:0.12px #000;transform:translateX(0.58px) scaleX(0.9857);">9</span>
<span class="t" style="left:4px;top:325px;font-size:15.3px;color:#000;-webkit-text-stroke:0.12px #000;transform:translateX(0.40px) scaleX(1.0401);">boolean_transform</span>
<span class="t" style="left:274px;top:325px;font-size:15.3px;color:#000;-webkit-text-stroke:0.12px #000;transform:translateX(0.16px) scaleX(1.0422);">direct_marking_required</span>
<span class="t" style="left:544px;top:325px;font-size:15.3px;color:#000;-webkit-text-stroke:0.12px #000;transform:translateX(0.50px);">128</span>
<span class="t" style="left:4px;top:375px;font-size:15.3px;color:#000;-webkit-text-stroke:0.12px #000;transform:translateX(0.29px) scaleX(1.0276);">vocab_transform</span>
<span class="t" style="left:274px;top:375px;font-size:15.3px;color:#000;-webkit-text-stroke:0.12px #000;transform:translateX(0.30px) scaleX(0.9687);">risk_class</span>
<span class="t" style="left:544px;top:375px;font-size:15.3px;color:#000;-webkit-text-stroke:0.12px #000;transform:translateX(0.49px) scaleX(1.0098);">17</span>
<div class="clip" style="left:811px;top:350px;width:144px;height:49px">
<span class="t" style="left:2px;top:14px;font-size:15.3px;color:#000;-webkit-text-stroke:0.12px #000;transform:translateX(0.40px) scaleX(1.0647);">I</span>
<span class="t" style="left:7px;top:14px;font-size:17.6px;color:#000;font-family:'DejaVu Sans',sans-serif;transform:translateX(0.31px) scaleX(0.9452);">→</span>
<span class="t" style="left:21px;top:14px;font-size:15.3px;color:#000;-webkit-text-stroke:0.12px #000;transform:translateX(0.73px) scaleX(0.8576);">CLASS_I,</span>
<span class="t" style="left:83px;top:14px;font-size:15.3px;color:#000;-webkit-text-stroke:0.12px #000;transform:translateX(0.21px) scaleX(0.9208);">IIa</span>
<span class="t" style="left:99px;top:14px;font-size:17.6px;color:#000;font-family:'DejaVu Sans',sans-serif;transform:translateX(0.67px) scaleX(0.9621);">→</span>
<span class="t" style="left:115px;top:14px;font-size:15.3px;color:#000;-webkit-text-stroke:0.12px #000;transform:translateX(0.15px) scaleX(0.9052);">CLASS_IIA,</span>
<span class="t" style="left:2px;top:37px;font-size:15.3px;color:#000;-webkit-text-stroke:0.12px #000;transform:translateX(0.47px) scaleX(1.0116);">IIb</span>
<span class="t" style="left:19px;top:37px;font-size:17.6px;color:#000;font-family:'DejaVu Sans',sans-serif;transform:translateX(0.47px) scaleX(0.9873);">→</span>
<span class="t" style="left:35px;top:37px;font-size:15.3px;color:#000;-webkit-text-stroke:0.12px #000;transform:scaleX(0.8565);">CLASS_IIB,</span>
<span class="t" style="left:109px;top:37px;font-size:15.3px;color:#000;-webkit-text-stroke:0.12px #000;transform:translateX(0.16px) scaleX(1.0611);">III</span>
<span class="t" style="left:122px;top:37px;font-size:17.6px;color:#000;font-family:'DejaVu Sans',sans-serif;transform:translateX(0.15px) scaleX(1.0294);">→</span>
<span class="t" style="left:138px;top:37px;font-size:15.3px;color:#000;-webkit-text-stroke:0.12px #000;transform:translateX(0.26px) scaleX(0.8905);">CLASS_III</span>
</div>
<span class="t" style="left:4px;top:425px;font-size:15.3px;color:#000;-webkit-text-stroke:0.12px #000;transform:translateX(0.29px) scaleX(1.0276);">vocab_transform</span>
<span class="t" style="left:274px;top:425px;font-size:15.3px;color:#000;-webkit-text-stroke:0.12px #000;transform:translateX(0.33px) scaleX(1.0055);">status</span>
<span class="t" style="left:544px;top:425px;font-size:15.3px;color:#000;-webkit-text-stroke:0.12px #000;transform:translateX(0.49px) scaleX(1.0081);">10</span>
<div class="clip" style="left:811px;top:400px;width:144px;height:49px">
<span class="t" style="left:3px;top:3px;font-size:15.3px;color:#000;-webkit-text-stroke:0.12px #000;transform:translateX(0.16px) scaleX(1.0211);">On market</span>
<span class="t" style="left:76px;top:3px;font-size:17.6px;color:#000;font-family:'DejaVu Sans',sans-serif;transform:translateX(0.11px) scaleX(0.9873);">→</span>
<span class="t" style="left:91px;top:3px;font-size:15.3px;color:#000;-webkit-text-stroke:0.12px #000;transform:translateX(0.23px) scaleX(0.9452);">ON_THE_MARKET,</span>
<span class="t" style="left:2px;top:26px;font-size:15.3px;color:#000;-webkit-text-stroke:0.12px #000;transform:translateX(0.61px) scaleX(1.0258);">Discontinued</span>
<span class="t" style="left:92px;top:26px;font-size:17.6px;color:#000;font-family:'DejaVu Sans',sans-serif;transform:translateX(0.74px) scaleX(1.0294);">→</span>
<span class="t" style="left:107px;top:26px;font-size:15.3px;color:#000;-webkit-text-stroke:0.12px #000;transform:translateX(0.86px) scaleX(0.9164);">NO_LONGER_PLACED_</span>
<span class="t" style="left:3px;top:49px;font-size:15.3px;color:#000;-webkit-text-stroke:0.12px #000;transform:translateX(0.23px) scaleX(0.9253);">ON_THE_MARKET</span>
</div>
<span class="t" style="left:4px;top:475px;font-size:15.3px;color:#000;-webkit-text-stroke:0.12px #000;transform:translateX(0.29px) scaleX(1.0276);">vocab_transform</span>
<span class="t" style="left:274px;top:475px;font-size:15.3px;color:#000;-webkit-text-stroke:0.12px #000;transform:translateX(0.36px) scaleX(1.0323);">mri_safety</span>
<span class="t" style="left:544px;top:475px;font-size:15.3px;color:#000;-webkit-text-stroke:0.12px #000;transform:translateX(0.49px) scaleX(1.0075);">130</span>
<div class="clip" style="left:811px;top:450px;width:144px;height:49px">
<span class="t" style="left:2px;top:3px;font-size:15.3px;color:#000;-webkit-text-stroke:0.12px #000;transform:translateX(0.61px) scaleX(1.0289);">MRI safety maps to</span>
<span class="t" style="left:3px;top:26px;font-size:15.3px;color:#000;-webkit-text-stroke:0.12px #000;transform:translateX(0.51px) scaleX(1.0176);">XML generation:</span>
<span class="t" style="left:120px;top:26px;font-size:15.3px;color:#000;-webkit-text-stroke:0.12px #000;transform:translateX(0.94px) scaleX(0.9161);">MR_SAFE</span>
<span class="t" style="left:2px;top:49px;font-size:15.3px;color:#000;-webkit-text-stroke:0.12px #000;transform:translateX(0.74px) scaleX(0.9205);">MR_CONDITIONAL</span>
<span class="t" style="left:137px;top:49px;font-size:17.6px;color:#000;font-family:'DejaVu Sans',sans-serif;transform:translateX(0.99px) scaleX(0.9873);">→</span>
</div>
<span class="t" style="left:4px;top:525px;font-size:15.3px;color:#000;-webkit-text-stroke:0.12px #000;transform:translateX(0.16px) scaleX(1.0448);">date_transform</span>
<span class="t" style="left:274px;top:525px;font-size:15.3px;color:#000;-webkit-text-stroke:0.12px #000;transform:translateX(0.16px) scaleX(1.0296);">date_first_placed_eu_market</span>
<span class="t" style="left:544px;top:525px;font-size:15.3px;color:#000;-webkit-text-stroke:0.12px #000;transform:translateX(0.58px) scaleX(0.9943);">93</span>
<div class="clip" style="left:811px;top:500px;width:144px;height:49px">
<span class="t" style="left:2px;top:14px;font-size:15.3px;color:#000;-webkit-text-stroke:0.12px #000;transform:translateX(0.63px) scaleX(1.0103);">Dates standardised</span>
<span class="t" style="left:140px;top:14px;font-size:15.3px;color:#000;-webkit-text-stroke:0.12px #000;transform:translateX(0.36px) scaleX(0.9181);">to YYYY-</span>
<span class="t" style="left:2px;top:37px;font-size:15.3px;color:#000;-webkit-text-stroke:0.12px #000;transform:translateX(0.56px) scaleX(1.0644);">MM-DD format</span>
</div>
<span class="t" style="left:4px;top:575px;font-size:15.3px;color:#000;-webkit-text-stroke:0.12px #000;transform:translateX(0.29px) scaleX(1.0276);">vocab_transform</span>
<span class="t" style="left:274px;top:575px;font-size:15.3px;color:#000;-webkit-text-stroke:0.12px #000;transform:translateX(0.07px) scaleX(1.0310);">issuing_entity</span>
<span class="t" style="left:544px;top:575px;font-size:15.3px;color:#000;-webkit-text-stroke:0.12px #000;transform:translateX(0.58px) scaleX(0.9857);">9</span>
<div class="clip" style="left:811px;top:550px;width:144px;height:49px">
<span class="t" style="left:2px;top:14px;font-size:15.3px;color:#000;-webkit-text-stroke:0.12px #000;transform:translateX(0.57px) scaleX(1.0563);">Normalised to</span>
<span class="t" style="left:2px;top:37px;font-size:15.3px;color:#000;-webkit-text-stroke:0.12px #000;transform:translateX(0.73px) scaleX(0.9294);">HIBCC/GS1/ICCBBA</span>
<span class="t" style="left:137px;top:37px;font-size:15.3px;color:#000;-webkit-text-stroke:0.12px #000;transform:translateX(0.09px) scaleX(1.0275);">/IFA</span>
</div>
<span class="t" style="left:4px;top:625px;font-size:15.3px;color:#000;-webkit-text-stroke:0.12px #000;transform:translateX(0.29px) scaleX(1.0276);">vocab_transform</span>
<span class="t" style="left:274px;top:625px;font-size:15.3px;color:#000;-webkit-text-stroke:0.12px #000;transform:translateX(0.33px) scaleX(1.0648);">production_identifier_type</span>
<span class="t" style="left:544px;top:625px;font-size:15.3px;color:#000;-webkit-text-stroke:0.12px #000;transform:translateX(0.51px) scaleX(0.9859);">105</span>
<div class="clip" style="left:811px;top:600px;width:144px;height:49px">
<span class="t" style="left:2px;top:3px;font-size:15.3px;color:#000;-webkit-text-stroke:0.12px #000;transform:translateX(0.73px) scaleX(0.9308);">LOT_NUMBER</span>
<span class="t" style="left:100px;top:3px;font-size:17.6px;color:#000;font-family:'DejaVu Sans',sans-serif;transform:translateX(0.44px) scaleX(0.9452);">→</span>
<span class="t" style="left:114px;top:3px;font-size:15.3px;color:#000;-webkit-text-stroke:0.12px #000;transform:translateX(0.69px) scaleX(0.9431);">BATCH_NUMBER,</span>
<span class="t" style="left:3px;top:26px;font-size:15.3px;color:#000;-webkit-text-stroke:0.12px #000;transform:translateX(0.24px) scaleX(0.9049);">SERIAL_NUMBER</span>
<span class="t" style="left:119px;top:26px;font-size:17.6px;color:#000;font-family:'DejaVu Sans',sans-serif;transform:translateX(0.97px) scaleX(1.0294);">→</span>
<span class="t" style="left:135px;top:26px;font-size:15.3px;color:#000;-webkit-text-stroke:0.12px #000;transform:translateX(0.59px) scaleX(0.9150);">SERIALISATION_N</span>
<span class="t" style="left:2px;top:49px;font-size:15.3px;color:#000;-webkit-text-stroke:0.12px #000;transform:translateX(0.76px) scaleX(0.9627);">UMBER</span>
<span class="t" style="left:60px;top:49px;font-size:15.3px;color:#000;-webkit-text-stroke:0.12px #000;transform:translateX(0.67px) scaleX(0.9749);">per</span>
<span class="t" style="left:86px;top:49px;font-size:15.3px;color:#000;-webkit-text-stroke:0.12px #000;transform:translateX(0.89px) scaleX(0.8857);">XSD</span>
<span class="t" style="left:118px;top:49px;font-size:15.3px;color:#000;-webkit-text-stroke:0.12px #000;transform:translateX(0.13px) scaleX(0.7131);">(DE</span>
<span class="t" style="left:137px;top:49px;font-size:15.3px;color:#000;-webkit-text-stroke:0.12px #000;transform:translateX(0.20px) scaleX(0.8527);">C</span>
</div>
<span class="t" style="left:4px;top:675px;font-size:15.3px;color:#000;-webkit-text-stroke:0.12px #000;transform:translateX(0.34px) scaleX(1.0181);">number_of_reuses_passthrough</span>
<span class="t" style="left:274px;top:675px;font-size:15.3px;color:#000;-webkit-text-stroke:0.12px #000;transform:translateX(0.33px) scaleX(1.0234);">number_of_reuses</span>
<div class="clip" style="left:811px;top:650px;width:144px;height:49px">
<span class="t" style="left:2px;top:3px;font-size:15.3px;color:#000;-webkit-text-stroke:0.12px #000;transform:translateX(0.85px) scaleX(1.0218);">number_of_reuses</span>
<span class="t" style="left:137px;top:3px;font-size:15.3px;color:#000;-webkit-text-stroke:0.12px #000;transform:translateX(0.17px) scaleX(1.0538);">column</span>
<span class="t" style="left:2px;top:26px;font-size:15.3px;color:#000;-webkit-text-stroke:0.12px #000;transform:translateX(0.88px) scaleX(1.0290);">present</span>
<span class="t" style="left:61px;top:26px;font-size:15.3px;color:#000;-webkit-text-stroke:0.12px #000;transform:translateX(0.05px) scaleX(0.8348);">—</span>
<span class="t" style="left:78px;top:26px;font-size:15.3px;color:#000;-webkit-text-stroke:0.12px #000;transform:translateX(0.92px) scaleX(1.0048);">coerced</span>
<span class="t" style="left:138px;top:26px;font-size:15.3px;color:#000;-webkit-text-stroke:0.12px #000;transform:translateX(0.68px) scaleX(1.1583);">to</span>
</div>
</div>
<div style="left:400px;top:281px;width:273px;height:53px;border:2px solid #1b6b3f;"></div>
<div style="left:402px;top:283px;width:269px;height:49px;border:1px solid #f4fbf7;"></div>
<div style="left:668px;top:329px;width:7px;height:7px;background:#f4fbf7;"></div>
<div style="left:669px;top:330px;width:5px;height:5px;background:#1f7a45;"></div>
<div style="left:1354px;top:259px;width:23px;height:708px;background:#131313;"></div>
<div style="left:1354px;top:283px;width:1px;height:684px;background:#5a5a5a;"></div>
<svg style="left:1362px;top:265px;" width="11.4" height="9" viewBox="0 0 11.4 9"><path d="M5.7 0.6Q6.3 0.6 6.8 1.3L10.9 7.4Q11.3 8.6 10 8.6H1.4Q0.1 8.6 0.5 7.4L4.6 1.3Q5.1 0.6 5.7 0.6Z" fill="#9d9d9d"/></svg>
<div style="left:1362.2px;top:279.8px;width:11.3px;height:479px;background:#9d9d9d;border-radius:5.6px;"></div>
<svg style="left:1361px;top:954.4px;" width="11.4" height="9" viewBox="0 0 11.4 9"><path d="M5.7 8.4Q6.3 8.4 6.8 7.7L10.9 1.6Q11.3 0.4 10 0.4H1.4Q0.1 0.4 0.5 1.6L4.6 7.7Q5.1 8.4 5.7 8.4Z" fill="#9d9d9d"/></svg>
<div style="left:368px;top:967px;width:1009px;height:40px;background:#0a0a0a;"></div>
<svg style="left:399.5px;top:978.5px;" width="8" height="15" viewBox="0 0 8 15"><path d="M7 1L1 7.5L7 14" fill="none" stroke="#fff" stroke-width="1.4"/></svg>
<svg style="left:440.5px;top:978.5px;" width="8" height="15" viewBox="0 0 8 15"><path d="M1 1L7 7.5L1 14" fill="none" stroke="#8a8a8a" stroke-width="1.4"/></svg>
<div style="left:476.6px;top:984.8px;width:3.2px;height:3.2px;background:#fff;border-radius:50%;"></div>
<div style="left:481.7px;top:984.8px;width:3.2px;height:3.2px;background:#fff;border-radius:50%;"></div>
<div style="left:486.8px;top:984.8px;width:3.2px;height:3.2px;background:#fff;border-radius:50%;"></div>
<span class="t" style="left:520px;top:988px;font-size:18.4px;color:#fff;transform:translateX(0.96px) scaleX(0.9102);">Gap Register</span>
<div style="left:636px;top:975px;width:1px;height:24px;background:#6a6a6a;"></div>
<div style="left:642px;top:967px;width:136px;height:35px;background:#ffffff;border-radius:0 0 5px 5px;"></div>
<svg style="left:637px;top:967px;" width="146" height="5" viewBox="0 0 146 5"><path d="M5 0H0.6A4.4 4.4 0 0 1 5 4.4ZM141 0H145.4A4.4 4.4 0 0 0 141 4.4Z" fill="#fff"/></svg>
<span class="t" style="left:651px;top:984px;font-size:18.4px;color:#1f1f1f;-webkit-text-stroke:0.25px #1f1f1f;transform:translateX(0.84px) scaleX(0.9809);">Transform Log</span>
<div style="left:652px;top:997px;width:116px;height:2px;background:#1d6f42;"></div>
<div style="left:783px;top:975.5px;width:1px;height:23px;background:#6a6a6a;"></div>
<svg style="left:835px;top:978.5px;" width="16" height="16" viewBox="0 0 16 16"><path d="M8 1V15M1 8H15" fill="none" stroke="#fff" stroke-width="1.5"/></svg>
<div style="left:978.8px;top:981.4px;width:2.4px;height:2.4px;background:#e8e8e8;"></div>
<div style="left:978.8px;top:986.1px;width:2.4px;height:2.4px;background:#e8e8e8;"></div>
<div style="left:978.8px;top:990.8px;width:2.4px;height:2.4px;background:#e8e8e8;"></div>
<div style="left:1000px;top:976px;width:357px;height:21px;background:#151515;border-radius:10.5px;"></div>
<svg style="left:1005.4px;top:981.4px;" width="9" height="11" viewBox="0 0 9 11"><path d="M0.6 5.5Q0.6 4.9 1.3 4.4L7.4 0.4Q8.6 0 8.6 1.3V9.7Q8.6 11 7.4 10.6L1.3 6.6Q0.6 6.1 0.6 5.5Z" fill="#9d9d9d"/></svg>
<svg style="left:1342.3px;top:981.4px;" width="9" height="11" viewBox="0 0 9 11"><path d="M8.4 5.5Q8.4 4.9 7.7 4.4L1.6 0.4Q0.4 0 0.4 1.3V9.7Q0.4 11 1.6 10.6L7.7 6.6Q8.4 6.1 8.4 5.5Z" fill="#9d9d9d"/></svg>
<div style="left:1020.5px;top:981.3px;width:196.5px;height:10.8px;background:#9d9d9d;border-radius:5.4px;"></div>
<div style="left:368px;top:1007px;width:1009px;height:24px;background:#111111;"></div>
<div style="left:368px;top:1006.5px;width:1009px;height:1px;background:#2b2b2b;"></div>
<span class="t" style="left:381px;top:1022px;font-size:13px;color:#fff;transform:translateX(0.70px) scaleX(0.9581);">Ready</span>
<span class="t" style="left:466px;top:1022px;font-size:13px;color:#fff;transform:translateX(0.70px) scaleX(1.0118);">Accessibility: Good to go</span>
<div style="left:993px;top:1007.5px;width:50px;height:23.5px;background:#222222;"></div>
<span class="t" style="left:1322px;top:1022px;font-size:13px;color:#fff;transform:translateX(0.88px) scaleX(0.9429);">100%</span>
<div style="left:1166px;top:1020.6px;width:124.8px;height:1px;background:#b5b5b5;"></div>
<div style="left:1225.6px;top:1013.4px;width:6px;height:15px;background:#a6a6a6;border-radius:1px;"></div>
<svg style="left:1150px;top:1016px;" width="10" height="10" viewBox="0 0 10 10"><path d="M0 5H9.6" stroke="#e6e6e6" stroke-width="1.2"/></svg>
<svg style="left:1296.5px;top:1016px;" width="10" height="10" viewBox="0 0 10 10"><path d="M0 5H9.6M4.8 0.2V9.8" stroke="#e6e6e6" stroke-width="1.2" fill="none"/></svg>
<svg style="left:440px;top:1008px" width="700" height="23" viewBox="440 1008 700 23"><circle cx="451.6" cy="1015" r="2.1" fill="none" stroke="#fff" stroke-width="1.1"/><path d="M445 1016.2Q444.6 1018.8 447.4 1019.2Q449.4 1019.4 449.4 1021.4V1026.2Q449.4 1029 446.8 1028.6 M458.2 1016.2Q458.6 1018.8 455.8 1019.2Q453.8 1019.4 453.8 1021.4V1022.4" fill="none" stroke="#ffffff" stroke-width="1.15" /><path d="M452.6 1026.2L455.4 1029L461.6 1022.6" fill="none" stroke="#ffffff" stroke-width="1.25" /><rect x="1009.4" y="1012.4" width="16.2" height="16.2" fill="none" stroke="#ffffff" stroke-width="1.3"/><path d="M1014.8 1012.4V1028.6M1020.2 1012.4V1028.6M1009.4 1017.8H1025.6M1009.4 1023.2H1025.6" fill="none" stroke="#ffffff" stroke-width="1.3" /><rect x="1059.4" y="1012.4" width="17.2" height="16.2" fill="none" stroke="#ffffff" stroke-width="1.3"/><rect x="1063.4" y="1015.8" width="9.2" height="9.6" fill="none" stroke="#ffffff" stroke-width="1.2"/><path d="M1065.4 1019H1070.6M1065.4 1022.2H1070.6" fill="none" stroke="#ffffff" stroke-width="1.1" /><rect x="1109.6" y="1012.4" width="16.8" height="16.2" fill="none" stroke="#ffffff" stroke-width="1.3"/><path d="M1114.2 1012.4V1021.2M1119.4 1012.4V1021.2M1109.6 1021.2H1121.6" fill="none" stroke="#ffffff" stroke-width="1.3" /></svg>
</div>
</body></html>
